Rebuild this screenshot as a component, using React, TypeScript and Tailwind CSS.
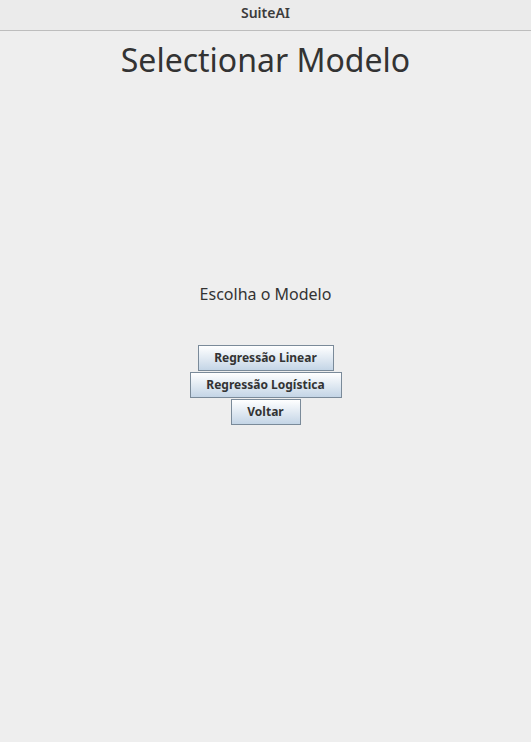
import React from "react";

const btn =
  "h-[26px] border border-[#7a8a99] bg-gradient-to-b from-[#ffffff] to-[#c4d5e6] text-[12px] font-bold text-[#333333] leading-none px-0 whitespace-nowrap";

export default function App() {
  return (
    <div className="w-[531px] h-[742px] bg-[#eeeeee] flex flex-col" style={{ fontFamily: '"Noto Sans", sans-serif' }}>
      <div className="h-[31px] border-b border-[#bdbdbd] bg-[#ebebeb] flex items-center justify-center pb-[5px]">
        <span className="text-[14px] font-semibold text-[#3c3c3c]">SuiteAI</span>
      </div>
      <div className="flex flex-col items-center">
        <h1 className="mt-[7px] text-[32px] leading-[44px] text-[#333333]">Selectionar Modelo</h1>
        <p className="mt-[201px] text-[16px] leading-[22px] text-[#333333]">Escolha o Modelo</p>
        <div className="mt-[40px] flex flex-col items-center gap-px">
          <button className={`${btn} w-[136px]`}>Regressão Linear</button>
          <button className={`${btn} w-[152px]`}>Regressão Logística</button>
          <button className={`${btn} w-[70px]`}>Voltar</button>
        </div>
      </div>
    </div>
  );
}
